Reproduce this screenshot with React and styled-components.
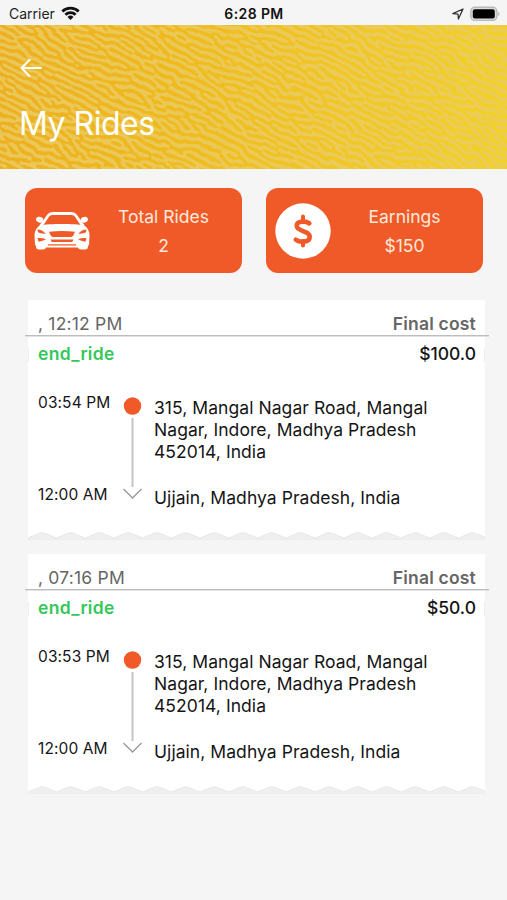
import React from "react";
import styled, { createGlobalStyle } from "styled-components";

const GlobalStyle = createGlobalStyle`
  * { box-sizing: border-box; }
  body { margin: 0; background: #f5f5f5; }
`;

const Screen = styled.main`
  width: 507px;
  height: 900px;
  overflow: hidden;
  background: #f5f5f5;
  color: #151515;
  font-family: Inter, "Liberation Sans", sans-serif;
`;

const StatusBar = styled.div`
  height: 25px;
  display: grid;
  grid-template-columns: 1fr auto 1fr;
  align-items: center;
  padding: 2px 7px 0 9px;
  font-size: 14px;
  line-height: 20px;
  color: #222;
`;

const StatusGroup = styled.div`
  display: flex;
  align-items: center;
  gap: ${(p) => p.$gap}px;
  justify-content: ${(p) => (p.$end ? "flex-end" : "flex-start")};
  svg { display: block; }
`;

const Clock = styled.span`
  padding-right: 1px;
  font-weight: 600;
  letter-spacing: 0.4px;
  color: #111;
`;

const Header = styled.header`
  position: relative;
  height: 144px;
  padding: 32px 19px 0;
  overflow: hidden;
  background: linear-gradient(97deg, #edaf20 0%, #efba1e 35%, #f1c726 70%, #f1d128 100%);
`;

const Texture = styled.svg`
  position: absolute;
  inset: 0;
  width: 507px;
  height: 144px;
`;

const HeaderContent = styled.div`
  position: relative;
  color: #fff;
`;

const BackButton = styled.button`
  display: block;
  width: 23px;
  height: 22px;
  padding: 0;
  border: 0;
  background: none;
  color: inherit;
  svg { display: block; }
`;

const Title = styled.h1`
  margin: 25px 0 0;
  font-size: 32px;
  line-height: 40px;
  font-weight: 400;
  letter-spacing: -0.5px;
`;

const Stats = styled.section`
  display: grid;
  grid-template-columns: 217px 217px;
  column-gap: 24px;
  padding: 19px 0 0 25px;
`;

const StatCard = styled.article`
  height: 85px;
  display: grid;
  grid-template-columns: 56px 1fr;
  column-gap: 12px;
  padding: 0 9px;
  align-items: center;
  border-radius: 12px;
  background: #f05a28;
  color: #ffe9dc;
  svg { display: block; }
`;

const StatText = styled.div`
  display: flex;
  flex-direction: column;
  align-items: center;
  padding: 0 8px 0 0;
  font-size: 17.5px;
  line-height: 29px;
  white-space: nowrap;
`;

const Rides = styled.section`
  display: flex;
  flex-direction: column;
  gap: 14px;
  padding: 27px 18px 0 25px;
`;

const RideCard = styled.article`
  height: 240px;
  display: flex;
  flex-direction: column;
`;

const RideTop = styled.div`
  height: 35px;
  margin: 0 4px 0 3px;
  padding: 12px 9px 0 10px;
  display: flex;
  justify-content: space-between;
  background: #fff;
  color: #666;
  font-size: 17.5px;
  line-height: 24px;
`;

const Rule = styled.div`
  height: 2px;
  background: #bdbdbd;
  border-bottom: 1px solid #e2e2e2;
`;

const RideBody = styled.div`
  flex: 1;
  margin: 0 4px 0 3px;
  padding: 5px 9px 0 10px;
  background:
    linear-gradient(#eeeeee, #eeeeee) 0 11px / 1px 14px no-repeat,
    linear-gradient(#eeeeee, #eeeeee) 100% 11px / 1px 14px no-repeat,
    #fff;
`;

const StatusRow = styled.div`
  display: flex;
  justify-content: space-between;
  font-size: 17.5px;
  line-height: 24px;
`;

const Label = styled.span`
  font-weight: ${(p) => p.$weight || 400};
  letter-spacing: ${(p) => p.$track || 0}px;
  color: ${(p) => p.$color || "inherit"};
`;

const Route = styled.div`
  display: grid;
  grid-template-columns: 84px 22px 1fr;
  height: 113px;
  margin-top: 27px;
`;

const Times = styled.div`
  display: flex;
  flex-direction: column;
  justify-content: space-between;
  height: 112px;
  font-size: 15.5px;
  line-height: 20px;
  letter-spacing: 0.1px;
  white-space: nowrap;
`;

const Places = styled.div`
  display: flex;
  flex-direction: column;
  gap: 24px;
  padding: 4px 0 0 10px;
  font-size: 17.5px;
  line-height: 22px;
  letter-spacing: 0.06px;
  white-space: nowrap;
`;

const Track = styled.svg`
  display: block;
  margin-top: 4px;
`;

const TornEdge = styled.svg`
  display: block;
  flex: none;
  margin-left: 3px;
`;

const Wifi = () => (
  <svg width="19" height="15" viewBox="0 0 19 15" fill="none" stroke="#111" strokeWidth="2.8">
    <path d="M1.3 5.4a11.7 11.7 0 0 1 16.4 0M4.4 8.7a7.3 7.3 0 0 1 10.2 0" />
    <path d="M9.5 14 6.5 11a4.3 4.3 0 0 1 6 0Z" fill="#111" stroke="none" />
  </svg>
);

const LocationArrow = () => (
  <svg width="12" height="12" viewBox="0 0 12 12" fill="none" stroke="#333" strokeWidth="1.3" strokeLinejoin="round">
    <path d="M.8 5.6 11 1 6.4 11 6 6.1Z" />
  </svg>
);

const Battery = () => (
  <svg width="30" height="16" viewBox="0 0 30 16">
    <rect x=".8" y="1.2" width="26" height="13.2" rx="4" fill="#ddd" stroke="#b9b9b9" strokeWidth="1.4" />
    <rect x="2.8" y="3.3" width="22" height="9.1" rx="2" fill="#000" />
    <path d="M28.3 5.5q2.4 2.4 0 4.8Z" fill="#aaa" />
  </svg>
);

const CarIcon = () => (
  <svg width="56" height="38" viewBox="0 0 56 38">
    <g fill="#fff">
      <path d="M2 30h10v4.5q0 3-3 3H5q-3 0-3-3ZM44 30h10v4.5q0 3-3 3h-4q-3 0-3-3Z" />
      <path d="M6 13C15 11.5 41 11.5 50 13Q56 18 55.5 24L55 32.5Q54 35.5 51 35.5H5Q2 35.5 1 32.5L.5 24Q0 18 6 13Z" />
      <ellipse cx="5.7" cy="7.8" rx="3.7" ry="2.8" transform="rotate(15 5.7 7.8)" />
      <ellipse cx="50.3" cy="7.8" rx="3.7" ry="2.8" transform="rotate(-15 50.3 7.8)" />
    </g>
    <path d="M6.5 14C11 10 12 5.5 15 2.8Q16.5 1.5 18.5 1.5h19q2 0 3.5 1.3C44 5.5 45 10 49.5 14" fill="none" stroke="#fff" strokeWidth="2.8" />
    <g fill="#f05a28">
      <path d="M15 19.7q13-1.4 26 0l-1.7 3.7q-1 1.6-3 1.6H19.7q-2 0-3-1.6Z" />
      <path d="M3.5 17.5q5.5.3 8 4.2-5.5.2-7.5-1.4ZM52.5 17.5q-5.5.3-8 4.2 5.5.2 7.5-1.4Z" />
      <path d="M3.5 26q5.5-.3 8.5 1.3-3 2-7.5 2.4ZM52.5 26q-5.5-.3-8.5 1.3 3 2 7.5 2.4Z" />
      <path d="M16.5 27.4h23l-1.3 2.6H17.8ZM14 32.3h28v1.2H14Z" />
    </g>
  </svg>
);

const DollarIcon = () => (
  <svg width="56" height="56" viewBox="0 0 56 56">
    <circle cx="28" cy="28" r="27.7" fill="#fff" />
    <path d="M34.3 20.4C31.5 18.2 21.7 17.2 21.7 22.8c0 6 13 4.5 13 11 0 6.4-10.7 5.5-13.9 2.9" fill="none" stroke="#f05a28" strokeWidth="4.6" strokeLinecap="round" />
    <path d="M28 13.6v4.5M28 38v4.5" stroke="#f05a28" strokeWidth="4" strokeLinecap="round" />
  </svg>
);

const ripples = Array.from({ length: 17 }, (_, i) => {
  const x = i * 28.7;
  return `L${x.toFixed(1)} 6L${(x + 11.5).toFixed(1)} 1.2Q${(x + 14).toFixed(1)} 0 ${(x + 16.5).toFixed(1)} 1.2`;
}).join("");

const rides = [
  { when: ", 12:12 PM", cost: "$100.0", start: "03:54 PM" },
  { when: ", 07:16 PM", cost: "$50.0", start: "03:53 PM" },
];

const growthSteps = [0, 1, 2, 3, 4];

// Repeated difference-of-blurs passes grow the noise into winding stripes.
function HeaderTexture() {
  return (
    <Texture viewBox="0 0 507 144" aria-hidden="true">
      <filter id="ripple" x="0" y="0" width="100%" height="100%" colorInterpolationFilters="sRGB">
        <feTurbulence type="fractalNoise" baseFrequency="0.12 0.25" numOctaves="2" seed="8" />
        <feColorMatrix values="0 0 0 0 0  0 0 0 0 0  0 0 0 0 0  1 0 0 0 0" result="s0" />
        {growthSteps.map((n) => (
          <React.Fragment key={n}>
            <feGaussianBlur in={`s${n}`} stdDeviation="1.5 1.1" result={`near${n}`} />
            <feGaussianBlur in={`s${n}`} stdDeviation="2.1 1.9" result={`far${n}`} />
            <feComposite in={`near${n}`} in2={`far${n}`} operator="arithmetic" k1="0" k2="6" k3="-6" k4="0.5" result={`s${n + 1}`} />
          </React.Fragment>
        ))}
        <feColorMatrix in="s5" values="0 0 0 0 .92  0 0 0 0 .8  0 0 0 0 .39  0 0 0 1 0" />
      </filter>
      <g transform="rotate(27 253 72)">
        <rect x="-80" y="-180" width="670" height="500" filter="url(#ripple)" opacity=".85" />
      </g>
    </Texture>
  );
}

function Ride({ ride }) {
  return (
    <RideCard>
      <RideTop>
        <Label $track={0.2}>{ride.when}</Label>
        <Label $weight={600} $track={0.2}>Final cost</Label>
      </RideTop>
      <Rule />
      <RideBody>
        <StatusRow>
          <Label $weight={600} $track={0.35} $color="#34c759">end_ride</Label>
          <Label $weight={500}>{ride.cost}</Label>
        </StatusRow>
        <Route>
          <Times>
            <span>{ride.start}</span>
            <span>12:00 AM</span>
          </Times>
          <Track width="22" height="106" viewBox="0 0 22 106">
            <circle cx="10.5" cy="9" r="8.7" fill="#f05a28" />
            <path d="M10.5 21v69" stroke="#c4c4c4" strokeWidth="2" />
            <path d="m1.5 92 9 9 9-9" fill="none" stroke="#999" strokeWidth="1.3" />
          </Track>
          <Places>
            <div>315, Mangal Nagar Road, Mangal<br />Nagar, Indore, Madhya Pradesh<br />452014, India</div>
            <div>Ujjain, Madhya Pradesh, India</div>
          </Places>
        </Route>
      </RideBody>
      <TornEdge width="457" height="8" viewBox="0 0 457 8">
        <rect width="457" height="7" fill="#fff" />
        <path d={`M0 8${ripples}L457 8Z`} fill="#efefef" stroke="#e8e8e8" strokeWidth="1" />
      </TornEdge>
    </RideCard>
  );
}

export default function App() {
  return (
    <>
      <GlobalStyle />
      <Screen>
        <StatusBar>
          <StatusGroup $gap={6}>Carrier <Wifi /></StatusGroup>
          <Clock>6:28 PM</Clock>
          <StatusGroup $gap={6} $end><LocationArrow /><Battery /></StatusGroup>
        </StatusBar>
        <Header>
          <HeaderTexture />
          <HeaderContent>
            <BackButton aria-label="Back">
              <svg width="23" height="22" viewBox="0 0 23 22" fill="none" stroke="#fff" strokeWidth="2" strokeLinecap="round" strokeLinejoin="round">
                <path d="M22 11H2.5M10.5 3 2.5 11l8 8" />
              </svg>
            </BackButton>
            <Title>My Rides</Title>
          </HeaderContent>
        </Header>
        <Stats>
          <StatCard><CarIcon /><StatText><span>Total Rides</span><span>2</span></StatText></StatCard>
          <StatCard><DollarIcon /><StatText><span>Earnings</span><span>$150</span></StatText></StatCard>
        </Stats>
        <Rides>
          {rides.map((ride) => <Ride key={ride.when} ride={ride} />)}
        </Rides>
      </Screen>
    </>
  );
}
